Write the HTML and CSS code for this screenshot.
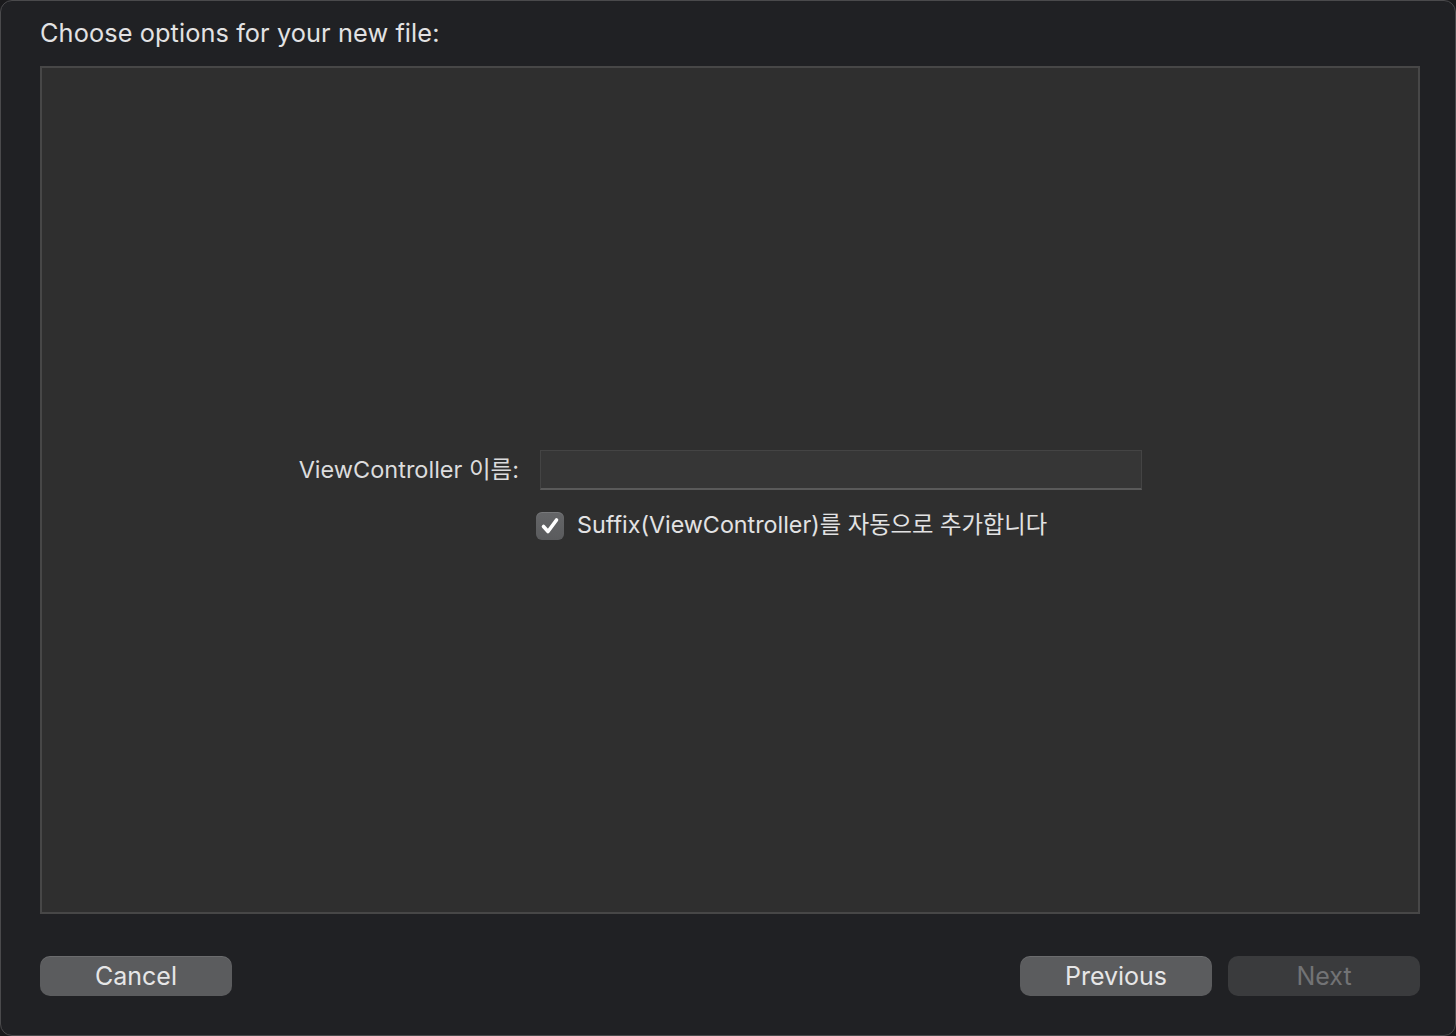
FILE: index.html
```html
<!DOCTYPE html>
<html lang="ko">
<head>
<meta charset="utf-8">
<title>Choose options</title>
<link rel="stylesheet" href="styles.css">
</head>
<body>
<div class="window">
  <h1 class="title">Choose options for your new file:</h1>
  <div class="panel">
    <div class="form">
      <div class="row">
        <label class="label" for="name">ViewController 이름:</label>
        <div class="field" id="name"></div>
      </div>
      <div class="row check-row">
        <span class="spacer"></span>
        <div class="check-wrap">
          <span class="checkbox">
            <svg width="28" height="28" viewBox="0 0 28 28"><path d="M7.5 14.5 L12 19.5 L20.5 8" fill="none" stroke="#ffffff" stroke-width="3.6" stroke-linecap="round" stroke-linejoin="round"/></svg>
          </span>
          <span class="check-label">Suffix(ViewController)를 자동으로 추가합니다</span>
        </div>
      </div>
    </div>
  </div>
  <div class="footer">
    <button class="btn">Cancel</button>
    <div class="right-btns">
      <button class="btn">Previous</button>
      <button class="btn disabled">Next</button>
    </div>
  </div>
</div>
</body>
</html>
```
FILE: styles.css
```css
* { box-sizing: border-box; }
html, body { margin: 0; padding: 0; }
body {
  background: #1a1a1c;
  font-family: Inter, "Noto Sans CJK KR", sans-serif;
  color: #e4e4e5;
}
.window {
  width: 1456px;
  height: 1036px;
  background: #202124;
  border: 1px solid #4a4a4c;
  border-radius: 12px;
  padding: 0 35px 0 39px;
  display: flex;
  flex-direction: column;
}
.title {
  margin: 0;
  height: 65px;
  padding-top: 16px;
  font-size: 25.3px;
  font-weight: 400;
  line-height: 32px;
  color: #e2e2e3;
  letter-spacing: 0.1px;
}
.panel {
  width: 1380px;
  height: 848px;
  background: #2f2f2f;
  border: 2px solid #474747;
}
.form {
  padding-top: 382px;
}
.row {
  display: flex;
  align-items: center;
}
.label {
  width: 477px;
  text-align: right;
  font-size: 23.5px;
  line-height: 30px;
  padding-bottom: 1px;
  color: #dcdcdd;
}
.field {
  margin-left: 21px;
  width: 602px;
  height: 40px;
  background: #363636;
  border: 1px solid #444444;
  border-bottom: 2px solid #5a5a5a;
}
.check-row {
  margin-top: 20px;
}
.spacer {
  width: 494px;
}
.check-wrap {
  display: flex;
  align-items: center;
}
.checkbox {
  width: 28px;
  height: 28px;
  border-radius: 6px;
  background: linear-gradient(#656668, #5a5b5d);
  box-shadow: inset 0 1px 0 rgba(255,255,255,0.12);
  display: block;
}
.checkbox svg { display: block; }
.check-label {
  margin-left: 13px;
  font-size: 23.3px;
  line-height: 30px;
  padding-bottom: 1px;
  color: #e2e2e3;
}
.footer {
  margin-top: 42px;
  width: 1380px;
  display: flex;
  justify-content: space-between;
}
.right-btns {
  display: flex;
  gap: 16px;
}
.btn {
  width: 192px;
  height: 40px;
  border: none;
  border-radius: 10px;
  background: #5b5c5e;
  box-shadow: inset 0 1px 0 rgba(255,255,255,0.1);
  color: #e6e6e7;
  font-family: Inter, "Noto Sans CJK KR", sans-serif;
  font-size: 25px;
  padding: 0;
  line-height: 40px;
}
.btn.disabled {
  background: #3a3b3d;
  color: #727375;
  box-shadow: none;
}
```
